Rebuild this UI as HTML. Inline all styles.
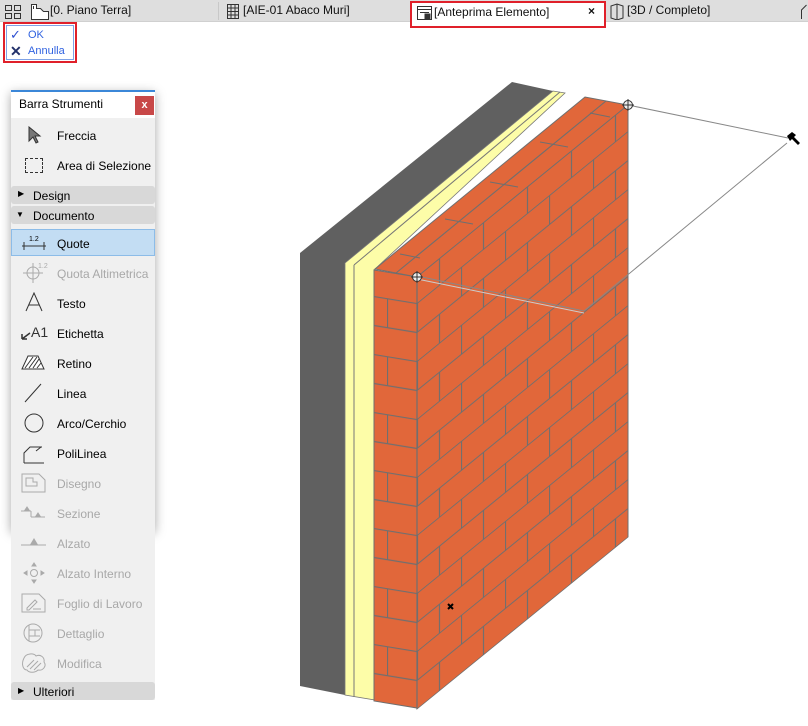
<!DOCTYPE html>
<html><head><meta charset="utf-8"><style>
*{margin:0;padding:0;box-sizing:border-box}
body{width:808px;height:726px;background:#fff;font-family:"Liberation Sans",sans-serif;font-size:12px;position:relative;overflow:hidden;color:#000}
.tabs{position:absolute;left:0;top:0;width:808px;height:22px;background:#dedede;border-bottom:1px solid #d0d0d0}
.tab{position:absolute;top:3px;font-size:12px;color:#111}
.sep{position:absolute;top:2px;width:1px;height:18px;background:#c8c8c8}
.abs{position:absolute}
.panel{position:absolute;left:11px;top:90px;width:144px;height:610px;background:#f0f0f0}
.shadow{position:absolute;left:11px;top:90px;width:144px;height:440px;box-shadow:0 3px 10px rgba(0,0,0,.35)}
.row{position:absolute;left:57px;font-size:12px}
.dis{color:#a8a8a8}
.bar{position:absolute;left:11px;width:144px;height:18px;background:#d8d8d8;border-radius:3px}
.ic{position:absolute;left:20px}
</style></head><body>
<div class="tabs">
 <svg class="abs" style="left:4px;top:4px" width="18" height="16"><g fill="none" stroke="#333"><rect x="1.5" y="1.5" width="6" height="5"/><rect x="10.5" y="1.5" width="6" height="5"/><rect x="1.5" y="9.5" width="6" height="5"/><rect x="10.5" y="9.5" width="6" height="5"/></g></svg>
 <svg class="abs" style="left:30px;top:3px" width="20" height="17"><path d="M1.5 1.5h5v4h4l3 3h5v8h-17z" fill="#fff" stroke="#333"/><path d="M3.5 3v3" stroke="#333"/></svg>
 <div class="tab" style="left:50px">[0. Piano Terra]</div>
 <div class="sep" style="left:218px"></div>
 <svg class="abs" style="left:226px;top:3px" width="14" height="17"><g fill="none" stroke="#333"><rect x="1.5" y="1.5" width="11" height="14"/><path d="M5 1.5v14M9 1.5v14M1.5 5h11M1.5 8.5h11M1.5 12h11"/></g></svg>
 <div class="tab" style="left:243px">[AIE-01 Abaco Muri]</div>
 <div class="abs" style="left:410px;top:1px;width:196px;height:27px;background:#fff;border:2px solid #e0202a"></div>
 <svg class="abs" style="left:416px;top:5px" width="17" height="16"><g fill="none" stroke="#333"><rect x="1.5" y="1.5" width="14" height="13"/><path d="M1.5 4.5h14M4 7.5h9"/><rect x="9" y="9" width="5" height="5" fill="#333"/></g></svg>
 <div class="tab" style="left:434px;top:5px">[Anteprima Elemento]</div>
 <div class="tab" style="left:588px;top:4px;font-weight:bold;font-size:12px">×</div>
 <svg class="abs" style="left:609px;top:3px" width="16" height="17"><path d="M2 3l6-2 6 2v12l-6 2-6-2z M8 1v16" fill="none" stroke="#333"/></svg>
 <div class="tab" style="left:627px">[3D / Completo]</div>
 <svg class="abs" style="left:800px;top:3px" width="10" height="17"><path d="M1.5 16V7l5-5" fill="none" stroke="#333"/></svg>
</div>
<div class="abs" style="left:3px;top:22px;width:74px;height:41px;border:2px solid #e0202a"></div>
<div class="abs" style="left:6px;top:25px;width:68px;height:35px;border:1px solid #7fa2e6"></div>
<div class="abs" style="left:10px;top:27px;color:#2d4fd0;font-size:13px">✓</div>
<div class="abs" style="left:28px;top:29px;color:#3062e0;font-size:11px">OK</div>
<div class="abs" style="left:10px;top:43px;color:#22306a;font-size:14px;font-weight:bold">✕</div>
<div class="abs" style="left:28px;top:45px;color:#3062e0;font-size:11px">Annulla</div>

<svg class="abs" style="left:0;top:0" width="808" height="726">
<defs>
<pattern id="br" width="44" height="58" patternUnits="userSpaceOnUse" patternTransform="translate(0,26)">
<rect width="44" height="58" fill="#e1673a"/>
<path d="M0 0.5H44M0 29.5H44M0.5 0V29M22.5 29V58" stroke="#6f6f6f" stroke-width="1.2" fill="none"/>
</pattern>
<pattern id="bl" width="44" height="58" patternUnits="userSpaceOnUse" patternTransform="translate(13,26)">
<rect width="44" height="58" fill="#e1673a"/>
<path d="M0 0.5H44M0 29.5H44M0.5 0V29" stroke="#6f6f6f" stroke-width="1.2" fill="none"/>
</pattern>
</defs>
<polygon points="300,253 512,82 553,91 345,263 345,695 300,686" fill="#606060"/>
<polygon points="345,263 553,91 565,93 375,269 375,700 345,695" fill="#fdfda8" stroke="#777" stroke-width="0.8"/>
<line x1="354" y1="265" x2="354" y2="697" stroke="#777"/>
<line x1="354" y1="265" x2="560" y2="92" stroke="#777"/>
<polygon points="375,269 585,97 628,105 417,277" fill="#e1673a" stroke="#6f6f6f"/>
<g stroke="#6f6f6f" stroke-width="1.1">
<line x1="396" y1="273" x2="606" y2="101"/>
<line x1="445" y1="219" x2="473" y2="224"/><line x1="490" y1="182" x2="518" y2="187"/><line x1="540" y1="142" x2="568" y2="147"/>
<line x1="465" y1="242" x2="493" y2="247"/><line x1="513" y1="202" x2="541" y2="207"/><line x1="560" y1="163" x2="588" y2="168"/><line x1="400" y1="254" x2="420" y2="258"/><line x1="590" y1="113" x2="610" y2="117"/>
</g>
<g transform="matrix(1,-0.815,0,1,417,277)"><rect x="0" y="0" width="211" height="432" fill="url(#br)" stroke="#6f6f6f"/></g>
<g transform="matrix(1,0.163,0,1,374,270)"><rect x="0" y="0" width="43" height="431" fill="url(#bl)" stroke="#6f6f6f"/></g>
<line x1="417" y1="277" x2="417" y2="709" stroke="#6f6f6f" stroke-width="1.2"/>
<g fill="none" stroke="#888">
<line x1="628" y1="105" x2="788" y2="138"/>
<path d="M417 276L584 311L787 143"/>
<path d="M417 279L584 313" stroke="#ccc"/>
</g>
<g fill="none" stroke="#333"><circle cx="628" cy="105" r="4.5" fill="#eee"/><path d="M622 105h12M628 99v12"/><circle cx="417" cy="277" r="4.5" fill="#eee"/><path d="M411 277h12M417 271v12"/></g>
<path d="M787 136l5-4 4 3 -2 2 6 6-2 2-6-6-2 2z" fill="#000"/>
<path d="M448 604l5 5M453 604l-5 5" stroke="#000" stroke-width="2"/>
</svg>

<div class="shadow"></div>
<div class="panel"></div>
<div class="abs" style="left:11px;top:90px;width:144px;height:2px;background:#3b87d8"></div>
<div class="abs" style="left:11px;top:92px;width:144px;height:26px;background:#fff"></div>
<div class="abs" style="left:19px;top:97px;font-size:12px">Barra Strumenti</div>
<div class="abs" style="left:135px;top:96px;width:19px;height:19px;background:#c84848;color:#fff;font-size:11px;text-align:center;line-height:18px;font-weight:bold">x</div>

<svg class="ic" style="top:126px;left:28px" width="14" height="18"><path d="M1 1v14l4-4 3 6 2-1-3-6h5z" fill="#777" stroke="#333"/></svg>
<div class="row" style="top:129px">Freccia</div>
<div class="ic" style="left:25px;top:158px;width:18px;height:15px;border:1px dashed #333"></div>
<div class="row" style="top:159px">Area di Selezione</div>
<div class="bar" style="top:186px"></div><div class="abs" style="left:18px;top:189px;font-size:8px">▶</div><div class="abs" style="left:33px;top:189px">Design</div>
<div class="bar" style="top:206px"></div><div class="abs" style="left:16px;top:210px;font-size:8px">▼</div><div class="abs" style="left:33px;top:209px">Documento</div>
<div class="abs" style="left:11px;top:229px;width:144px;height:27px;background:#c3ddf3;border:1px solid #8cbce8"></div>
<svg class="ic" style="top:233px" width="28" height="18"><path d="M2 13h24M4 9v8M24 9v8" stroke="#333" fill="none"/><text x="9" y="8" font-size="7" font-family="Liberation Sans">1.2</text></svg>
<div class="row" style="top:237px">Quote</div>
<svg class="ic" style="top:261px" width="30" height="22"><g stroke="#aaa" fill="none"><circle cx="13" cy="12" r="6"/><path d="M3 12h20M13 2v20"/></g><text x="18" y="7" font-size="7" fill="#aaa" font-family="Liberation Sans">1.2</text></svg>
<div class="row dis" style="top:267px">Quota Altimetrica</div>
<svg class="ic" style="top:292px;left:25px" width="18" height="20"><path d="M1 19L9 1l8 18M4 13h10" stroke="#333" fill="none"/></svg>
<div class="row" style="top:297px">Testo</div>
<svg class="ic" style="top:323px" width="30" height="18"><path d="M2 16l8-6M2 16h5M2 16v-5" stroke="#333" fill="none" stroke-width="1.5"/><text x="11" y="14" font-size="14" font-family="Liberation Sans" fill="#333">A1</text></svg>
<div class="row" style="top:327px">Etichetta</div>
<svg class="ic" style="top:353px" width="26" height="18"><path d="M2 16L8 3h10l6 13z" fill="#fff" stroke="#333"/><path d="M5 15l8-11M9 15l8-11M13 15l6-9M17 15l4-5" stroke="#333"/></svg>
<div class="row" style="top:357px">Retino</div>
<svg class="ic" style="top:382px" width="26" height="22"><path d="M5 20L21 2" stroke="#333"/></svg>
<div class="row" style="top:387px">Linea</div>
<svg class="ic" style="top:412px" width="28" height="22"><circle cx="14" cy="11" r="9" stroke="#333" fill="none"/></svg>
<div class="row" style="top:417px">Arco/Cerchio</div>
<svg class="ic" style="top:442px" width="28" height="22"><path d="M4 21V11l6-6h12M16 9l5-4" stroke="#333" fill="none"/><path d="M4 21h20" stroke="#333"/></svg>
<div class="row" style="top:447px">PoliLinea</div>
<svg class="ic" style="top:472px" width="28" height="22"><g stroke="#aaa" fill="none"><path d="M2 2h17l6 6v12h-23z"/><path d="M6 6h7v4h4v4h-11z"/></g></svg>
<div class="row dis" style="top:477px">Disegno</div>
<svg class="ic" style="top:502px" width="30" height="22"><g stroke="#aaa" fill="#aaa"><path d="M1 9h10M11 9v6M11 15h14" fill="none"/><path d="M5 8l2-3 2 3z M16 14l2-3 2 3z"/></g></svg>
<div class="row dis" style="top:507px">Sezione</div>
<svg class="ic" style="top:532px" width="30" height="22"><g stroke="#aaa" fill="#aaa"><path d="M1 13h25" fill="none"/><path d="M11 12l3-5 3 5z"/></g></svg>
<div class="row dis" style="top:537px">Alzato</div>
<svg class="ic" style="top:561px" width="30" height="24"><g stroke="#aaa" fill="#aaa"><circle cx="14" cy="12" r="3.5" fill="none"/><path d="M12 5l2-3 2 3zM12 19l2 3 2-3zM7 10l-3 2 3 2zM21 10l3 2-3 2z"/></g></svg>
<div class="row dis" style="top:567px">Alzato Interno</div>
<svg class="ic" style="top:592px" width="28" height="22"><g stroke="#aaa" fill="none"><path d="M2 2h17l6 6v12h-23z"/><path d="M7 16l8-8 2 2-8 8h-2zM13 17h8"/></g></svg>
<div class="row dis" style="top:597px">Foglio di Lavoro</div>
<svg class="ic" style="top:622px" width="28" height="22"><g stroke="#aaa" fill="none"><circle cx="13" cy="11" r="9"/><path d="M9 3v16M9 8h11M9 14h11M15 8v6"/></g></svg>
<div class="row dis" style="top:627px">Dettaglio</div>
<svg class="ic" style="top:652px" width="28" height="22"><g stroke="#aaa" fill="none"><path d="M4 6c2-5 10-5 12-2 4-2 9 1 8 6 3 4-1 9-6 8-3 3-9 3-11 0-4 0-6-6-3-12z"/><path d="M7 15l7-7M10 17l8-8M14 18l7-7"/></g></svg>
<div class="row dis" style="top:657px">Modifica</div>
<div class="bar" style="top:682px"></div><div class="abs" style="left:18px;top:686px;font-size:8px">▶</div><div class="abs" style="left:33px;top:685px">Ulteriori</div>
</body></html>
